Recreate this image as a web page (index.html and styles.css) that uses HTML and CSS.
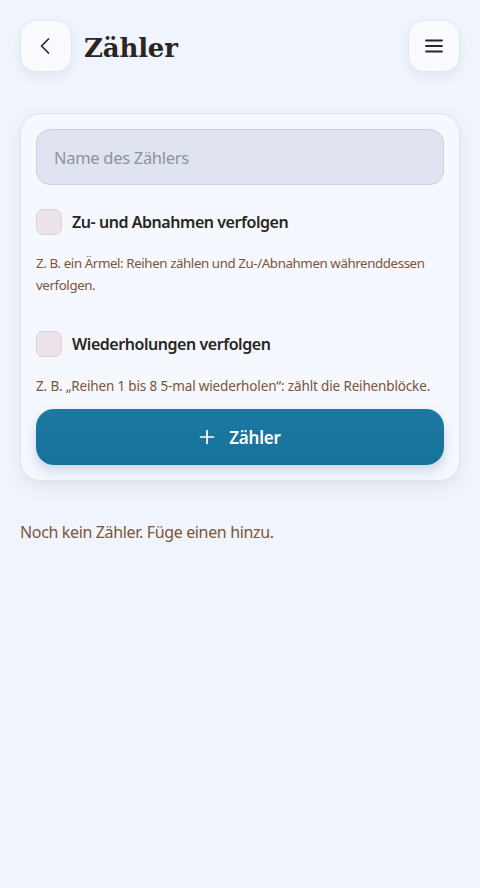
FILE: index.html
```html
<!DOCTYPE html>
<html lang="de">
<head>
    <meta charset="UTF-8">
    <title>Zähler</title>
    <link rel="stylesheet" href="styles.css">
</head>
<body>
<header class="topbar">
    <button class="icon-btn" aria-label="Zurück">
        <svg width="20" height="20" viewBox="0 0 20 20"><path d="M12.5 3 L5.5 10 L12.5 17" fill="none" stroke="#2a2522" stroke-width="1.7" stroke-linecap="round" stroke-linejoin="round"/></svg>
    </button>
    <h1 class="title">Zähler</h1>
    <button class="icon-btn menu" aria-label="Menü">
        <svg width="20" height="20" viewBox="0 0 20 20"><path d="M2 4.5 H18 M2 10 H18 M2 15.5 H18" fill="none" stroke="#2a2522" stroke-width="1.8" stroke-linecap="round"/></svg>
    </button>
</header>

<section class="card">
    <input type="text" class="name-input" placeholder="Name des Zählers"/>

    <label class="check">
        <span class="box"></span>
        <span class="check-label">Zu- und Abnahmen verfolgen</span>
    </label>
    <p class="hint hint-first">Z. B. ein Ärmel: Reihen zählen und Zu-/Abnahmen währenddessen verfolgen.</p>

    <label class="check check-second">
        <span class="box"></span>
        <span class="check-label">Wiederholungen verfolgen</span>
    </label>
    <p class="hint hint-second">Z. B. „Reihen 1 bis 8 5-mal wiederholen“: zählt die Reihenblöcke.</p>

    <button class="add-btn">
        <svg width="16" height="16" viewBox="0 0 16 16"><path d="M8 1.5 V14.5 M1.5 8 H14.5" stroke="#fff" stroke-width="1.7" stroke-linecap="round"/></svg>
        <span>Zähler</span>
    </button>
</section>

<p class="empty">Noch kein Zähler. Füge einen hinzu.</p>
</body>
</html>
```

FILE: styles.css
```css
* {
    margin: 0;
    padding: 0;
    box-sizing: border-box;
}

html, body {
    width: 100%;
    overflow-x: hidden;
}

body {
    background: #f0f4fc;
    font-family: "Noto Sans", "Open Sans", sans-serif;
    color: #2a2522;
    padding: 20px 20px 0 20px;
}

button {
    border: none;
    font-family: inherit;
    cursor: pointer;
}

.topbar {
    display: flex;
    align-items: center;
    height: 52px;
}

.icon-btn {
    width: 52px;
    height: 52px;
    border-radius: 16px;
    background: #f9fbfe;
    border: 1px solid #e2e6ee;
    box-shadow: 0 4px 10px rgba(120, 130, 160, 0.12);
    display: flex;
    align-items: center;
    justify-content: center;
}

.icon-btn.menu {
    margin-left: auto;
}

.title {
    margin-left: 12px;
    font-family: "DejaVu Serif", "Liberation Serif", serif;
    font-size: 26px;
    font-weight: bold;
    color: #2a2522;
    letter-spacing: -0.2px;
    padding-top: 4px;
}

.card {
    margin-top: 41px;
    background: #f5f8fe;
    border: 1px solid #dde3ee;
    border-radius: 20px;
    padding: 15px;
    box-shadow: 0 6px 16px rgba(110, 120, 160, 0.12);
}

.name-input {
    display: block;
    width: 100%;
    height: 56px;
    border-radius: 14px;
    border: 1px solid #c9d1e1;
    background: #dfe4f0;
    padding: 0 17px;
    font-family: inherit;
    font-size: 16.5px;
    letter-spacing: -0.3px;
    color: #2a2522;
    outline: none;
}

.name-input::placeholder {
    color: #8c93a3;
}

.check {
    display: flex;
    align-items: center;
    margin-top: 24px;
    height: 26px;
}

.check-second {
    margin-top: 35px;
}

.box {
    width: 26px;
    height: 26px;
    border-radius: 7px;
    background: #ece3eb;
    border: 1px solid #ddd1db;
}

.check-label {
    margin-left: 10px;
    font-size: 16px;
    font-weight: 600;
    letter-spacing: -0.45px;
    color: #2a2522;
}

.hint {
    font-size: 13.5px;
    line-height: 22px;
    letter-spacing: -0.15px;
    color: #7d5436;
}

.hint-first {
    margin-top: 17px;
    font-size: 13.3px;
    letter-spacing: -0.4px;
    margin-right: -4px;
}

.hint-second {
    margin-top: 18px;
}

.add-btn {
    margin-top: 12px;
    width: 100%;
    height: 56px;
    border-radius: 18px;
    background: linear-gradient(#1c7aa2, #15729a);
    box-shadow: 0 6px 12px rgba(60, 90, 150, 0.22);
    color: #fff;
    font-size: 17px;
    font-weight: 600;
    letter-spacing: -0.2px;
    display: flex;
    align-items: center;
    justify-content: center;
    gap: 14px;
}

.empty {
    margin-top: 40px;
    font-size: 16px;
    letter-spacing: -0.35px;
    color: #7d5436;
}
```
